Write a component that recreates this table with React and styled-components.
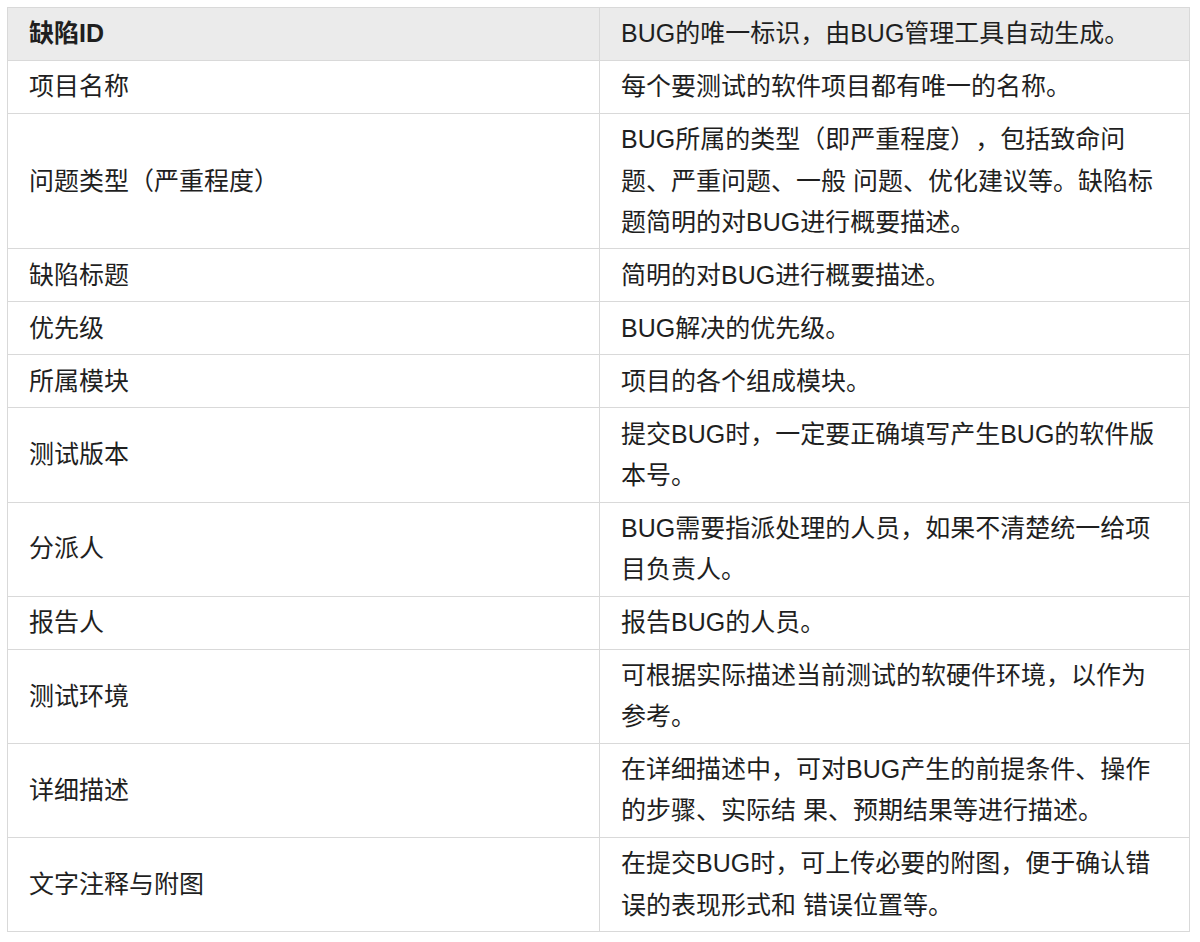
import styled, { createGlobalStyle } from 'styled-components';

const GlobalStyle = createGlobalStyle`
    body {
        margin: 0;
        padding: 7px 11px 8px 7px;
        background: #ffffff;
        font-family: "Liberation Sans", "Noto Sans CJK SC", sans-serif;
    }
`;

const rows = [
    ['项目名称', '每个要测试的软件项目都有唯一的名称。'],
    ['问题类型（严重程度）', 'BUG所属的类型（即严重程度），包括致命问题、严重问题、一般 问题、优化建议等。缺陷标题简明的对BUG进行概要描述。'],
    ['缺陷标题', '简明的对BUG进行概要描述。'],
    ['优先级', 'BUG解决的优先级。'],
    ['所属模块', '项目的各个组成模块。'],
    ['测试版本', '提交BUG时，一定要正确填写产生BUG的软件版本号。'],
    ['分派人', 'BUG需要指派处理的人员，如果不清楚统一给项目负责人。'],
    ['报告人', '报告BUG的人员。'],
    ['测试环境', '可根据实际描述当前测试的软硬件环境，以作为参考。'],
    ['详细描述', '在详细描述中，可对BUG产生的前提条件、操作的步骤、实际结 果、预期结果等进行描述。'],
    ['文字注释与附图', '在提交BUG时，可上传必要的附图，便于确认错误的表现形式和 错误位置等。'],
];

export default function App () {
    return (
        <>
            <GlobalStyle />
            <Table>
                <colgroup>
                    <col style={{ width: '592px' }} />
                    <col />
                </colgroup>
                <thead>
                    <HeadRow>
                        <Cell as="th" $strong>缺陷ID</Cell>
                        <Cell as="th">BUG的唯一标识，由BUG管理工具自动生成。</Cell>
                    </HeadRow>
                </thead>
                <tbody>
                    {rows.map(([name, desc]) => (
                        <tr key={name}>
                            <Cell>{name}</Cell>
                            <Cell>{desc}</Cell>
                        </tr>
                    ))}
                </tbody>
            </Table>
        </>
    );
}

const Table = styled.table`
    width: 1183px;
    border-collapse: collapse;
    table-layout: fixed;
    color: #1f1f1f;
    font-size: 25px;
    line-height: 41.2px;
    text-spacing-trim: space-all;
`;

const HeadRow = styled.tr`
    background-color: #ebebeb;
`;

const Cell = styled.td`
    border: 1px solid #d9d9d9;
    padding: 5.4px 21px 5.4px 21px;
    text-align: left;
    vertical-align: middle;
    font-weight: ${props => props.$strong ? 700 : 400};
`;
